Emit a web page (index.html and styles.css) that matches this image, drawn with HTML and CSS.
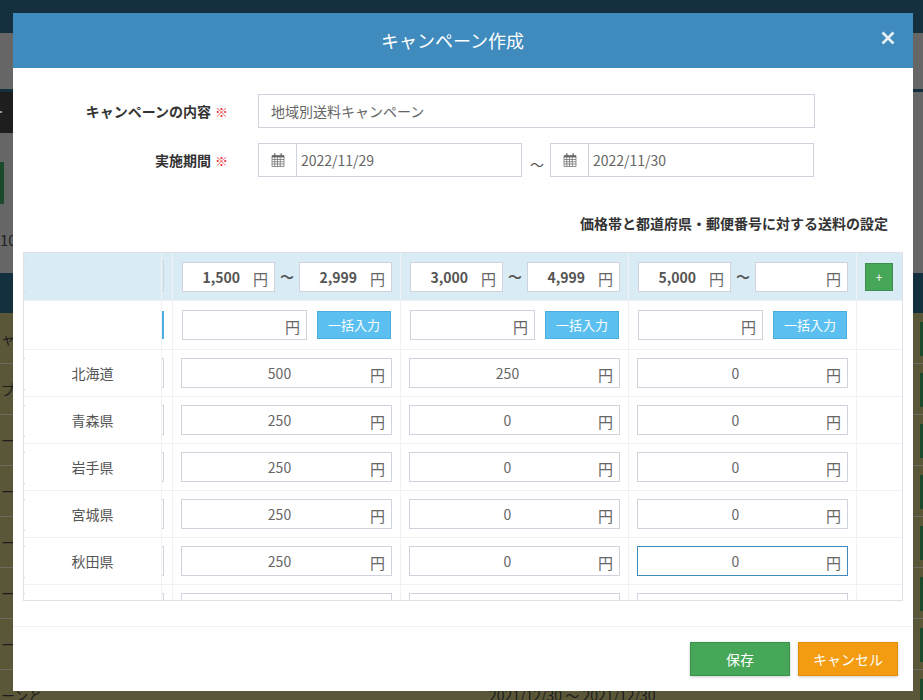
FILE: index.html
```html
<!DOCTYPE html>
<html lang="ja">
<head>
  <meta charset="UTF-8">
  <meta name="viewport" content="width=device-width, initial-scale=1.0">
  <title>キャンペーン作成</title>
  <link rel="stylesheet" href="styles.css">
</head>
<body>
  <div class="page">
    <div class="topbar"></div>
    <div class="subbar"></div>
    <div class="panel">
      <div class="panel-tab"></div>
      <div class="panel-btn"></div>
      <div class="panel-count">10</div>
    </div>
    <div class="list-head"></div>
    <div class="list-row"><div>ャ</div><div></div><div><span class="list-btn"></span></div></div>
    <div class="list-row"><div>プ</div><div></div><div><span class="list-btn"></span></div></div>
    <div class="list-row"><div>ー</div><div></div><div><span class="list-btn"></span></div></div>
    <div class="list-row"><div>ー</div><div></div><div><span class="list-btn"></span></div></div>
    <div class="list-row"><div>ー</div><div></div><div><span class="list-btn"></span></div></div>
    <div class="list-row"><div>ー</div><div></div><div><span class="list-btn"></span></div></div>
    <div class="list-row"><div>ー</div><div></div><div><span class="list-btn"></span></div></div>
    <div class="list-row"><div>ーンと</div><div class="list-date">2021/12/30 〜 2021/12/30</div><div><span class="list-btn"></span></div></div>
  </div>

  <div class="modal">
    <div class="modal-header">
      <h2>キャンペーン作成</h2>
      <svg class="modal-close" width="14" height="14" viewBox="0 0 14 14">
        <path d="M1.5 1.5L12.5 12.5M12.5 1.5L1.5 12.5" stroke="#e9f1f7" stroke-width="2.6" fill="none"/>
      </svg>
    </div>

    <div class="modal-body">
      <div class="form-grid">
        <div class="form-label">キャンペーンの内容<span class="req">※</span></div>
        <div class="text-input">地域別送料キャンペーン</div>
        <div class="form-label">実施期間<span class="req">※</span></div>
        <div class="date-range">
          <div class="date-input">
            <span class="date-icon">
              <svg width="14" height="14" viewBox="0 0 14 14">
                <path d="M1 2.500h12v11H1zM1 6.500h12M1 8.750h12M1 11h12M3.750 4.500v9M6.500 4.500v9M9.250 4.500v9" stroke="#666" stroke-width="0.7" fill="none"/>
                <path d="M1 2.500h12v2H1z" fill="#666"/>
                <path d="M3.800 0.300v2.700M10.200 0.300v2.700" stroke="#666" stroke-width="1.300" fill="none"/>
              </svg>
            </span>
            <span class="date-text">2022/11/29</span>
          </div>
          <span class="date-sep">〜</span>
          <div class="date-input">
            <span class="date-icon">
              <svg width="14" height="14" viewBox="0 0 14 14">
                <path d="M1 2.500h12v11H1zM1 6.500h12M1 8.750h12M1 11h12M3.750 4.500v9M6.500 4.500v9M9.250 4.500v9" stroke="#666" stroke-width="0.7" fill="none"/>
                <path d="M1 2.500h12v2H1z" fill="#666"/>
                <path d="M3.800 0.300v2.700M10.200 0.300v2.700" stroke="#666" stroke-width="1.300" fill="none"/>
              </svg>
            </span>
            <span class="date-text">2022/11/30</span>
          </div>
        </div>
      </div>

      <div class="section-title">価格帯と都道府県・郵便番号に対する送料の設定</div>

      <div class="price-table">
        <div class="price-row head-row">
          <div class="cell name-cell"></div>
          <div class="cell cut-cell"><span class="cut-input"></span></div>
          <div class="cell range-cell">
            <div class="field range-field">1,500<span class="yen">円</span></div><span class="range-sep">〜</span><div class="field range-field">2,999<span class="yen">円</span></div>
          </div>
          <div class="cell range-cell">
            <div class="field range-field">3,000<span class="yen">円</span></div><span class="range-sep">〜</span><div class="field range-field">4,999<span class="yen">円</span></div>
          </div>
          <div class="cell range-cell">
            <div class="field range-field">5,000<span class="yen">円</span></div><span class="range-sep">〜</span><div class="field range-field"><span class="yen">円</span></div>
          </div>
          <div class="cell add-cell"><span class="add-btn">+</span></div>
        </div>

        <div class="price-row bulk-row">
          <div class="cell name-cell no-ticks"></div>
          <div class="cell cut-cell"><span class="cut-btn"></span></div>
          <div class="cell bulk-cell"><div class="field bulk-field"><span class="yen">円</span></div><span class="bulk-btn">一括入力</span></div>
          <div class="cell bulk-cell"><div class="field bulk-field"><span class="yen">円</span></div><span class="bulk-btn">一括入力</span></div>
          <div class="cell bulk-cell"><div class="field bulk-field"><span class="yen">円</span></div><span class="bulk-btn">一括入力</span></div>
          <div class="cell"></div>
        </div>

        <div class="price-row">
          <div class="cell name-cell">北海道</div>
          <div class="cell cut-cell"><span class="cut-input"></span></div>
          <div class="cell fee-cell"><div class="field fee-field">500<span class="yen">円</span></div></div>
          <div class="cell fee-cell"><div class="field fee-field">250<span class="yen">円</span></div></div>
          <div class="cell fee-cell"><div class="field fee-field">0<span class="yen">円</span></div></div>
          <div class="cell"></div>
        </div>
        <div class="price-row">
          <div class="cell name-cell">青森県</div>
          <div class="cell cut-cell"><span class="cut-input"></span></div>
          <div class="cell fee-cell"><div class="field fee-field">250<span class="yen">円</span></div></div>
          <div class="cell fee-cell"><div class="field fee-field">0<span class="yen">円</span></div></div>
          <div class="cell fee-cell"><div class="field fee-field">0<span class="yen">円</span></div></div>
          <div class="cell"></div>
        </div>
        <div class="price-row">
          <div class="cell name-cell">岩手県</div>
          <div class="cell cut-cell"><span class="cut-input"></span></div>
          <div class="cell fee-cell"><div class="field fee-field">250<span class="yen">円</span></div></div>
          <div class="cell fee-cell"><div class="field fee-field">0<span class="yen">円</span></div></div>
          <div class="cell fee-cell"><div class="field fee-field">0<span class="yen">円</span></div></div>
          <div class="cell"></div>
        </div>
        <div class="price-row">
          <div class="cell name-cell">宮城県</div>
          <div class="cell cut-cell"><span class="cut-input"></span></div>
          <div class="cell fee-cell"><div class="field fee-field">250<span class="yen">円</span></div></div>
          <div class="cell fee-cell"><div class="field fee-field">0<span class="yen">円</span></div></div>
          <div class="cell fee-cell"><div class="field fee-field">0<span class="yen">円</span></div></div>
          <div class="cell"></div>
        </div>
        <div class="price-row">
          <div class="cell name-cell">秋田県</div>
          <div class="cell cut-cell"><span class="cut-input"></span></div>
          <div class="cell fee-cell"><div class="field fee-field">250<span class="yen">円</span></div></div>
          <div class="cell fee-cell"><div class="field fee-field">0<span class="yen">円</span></div></div>
          <div class="cell fee-cell"><div class="field fee-field focused">0<span class="yen">円</span></div></div>
          <div class="cell"></div>
        </div>
        <div class="price-row">
          <div class="cell name-cell"></div>
          <div class="cell cut-cell"><span class="cut-input"></span></div>
          <div class="cell fee-cell"><div class="field fee-field"></div></div>
          <div class="cell fee-cell"><div class="field fee-field"></div></div>
          <div class="cell fee-cell"><div class="field fee-field"></div></div>
          <div class="cell"></div>
        </div>
      </div>
    </div>

    <div class="modal-footer">
      <span class="btn btn-save">保存</span>
      <span class="btn btn-cancel">キャンセル</span>
    </div>
  </div>
</body>
</html>
```

FILE: styles.css
```css
* {
  box-sizing: border-box;
}
html, body {
  margin: 0;
  height: 700px;
  overflow: hidden;
}
body {
  position: relative;
  background-color: #666;
  font-family: 'Noto Sans CJK JP', 'Noto Sans', sans-serif;
  font-size: 14px;
  color: #666;
}

/* dimmed page behind the modal */
.topbar {
  height: 33px;
  background-color: #14303f;
}
.subbar {
  height: 59px;
  background-color: #666;
  border-bottom: 3px solid #14303f;
}
.panel {
  height: 181px;
  background-color: #666;
  color: #222;
}
.panel-tab {
  width: 60px;
  height: 41px;
  padding-top: 19px;
  background-color: #1e1e1e;
}
.panel-tab::before {
  content: '';
  display: block;
  width: 2px;
  height: 2px;
  background-color: #999;
}
.panel-btn {
  width: 4px;
  height: 42px;
  margin-top: 29px;
  background-color: #1a4a2b;
}
.panel-count {
  margin-top: 26px;
  font-size: 15px;
  line-height: 20px;
}
.list-head {
  height: 40px;
  background-color: #14303f;
}
.list-row {
  display: grid;
  grid-template-columns: 361px 421px 1fr;
  height: 51px;
  background-color: #5a5739;
  border-bottom: 1px solid #6b6a62;
  color: #1c1c1c;
  line-height: 51px;
}
.list-row > div:first-child {
  padding-left: 1px;
}
.list-row > div:last-child {
  display: flex;
  justify-content: flex-end;
  padding-top: 9px;
}
.list-date {
  padding-left: 128px;
}
.list-btn {
  width: 3px;
  height: 34px;
  background-color: #1a4a2b;
}

/* modal */
.modal {
  position: absolute;
  top: 13px;
  left: 13px;
  width: 900px;
  height: 678px;
  background-color: #fff;
}
.modal-header {
  position: relative;
  height: 55px;
  padding-right: 21px;
  background-color: #408bbd;
}
.modal-header h2 {
  margin: 0;
  color: #fff;
  font-size: 18px;
  font-weight: 400;
  line-height: 55px;
  text-align: center;
}
.modal-close {
  position: absolute;
  top: 18px;
  right: 18px;
}
.modal-body {
  height: 559px;
  padding: 26px 10px 0;
  border-bottom: 1px solid #f0f1f4;
}

.form-grid {
  display: grid;
  grid-template-columns: 204px 557px;
  column-gap: 31px;
  row-gap: 15px;
}
.form-label {
  display: flex;
  align-items: center;
  justify-content: flex-end;
  height: 34px;
  color: #333;
  font-weight: 700;
}
.req {
  margin: 0 -1px 0 4px;
  color: #e8303a;
  font-size: 13px;
  font-weight: 400;
}
.text-input {
  height: 34px;
  padding-left: 12px;
  border: 1px solid #d0d3de;
  line-height: 33px;
}
.date-range {
  display: flex;
  align-items: center;
}
.date-input {
  display: flex;
  width: 264px;
  height: 34px;
  border: 1px solid #d0d3de;
}
.date-icon {
  display: flex;
  align-items: center;
  justify-content: center;
  width: 38px;
  border-right: 1px solid #d0d3de;
}
.date-text {
  padding-left: 4px;
  line-height: 33px;
}
.date-sep {
  width: 28px;
  padding: 7px 0 0 2px;
  color: #555;
  text-align: center;
}

.section-title {
  margin-top: 36px;
  padding-right: 15px;
  color: #333;
  font-weight: 700;
  line-height: 20px;
  text-align: right;
}

/* price table */
.price-table {
  width: 880px;
  height: 349px;
  margin-top: 19px;
  border: 1px solid #e0e1e8;
  overflow: hidden;
}
.price-row {
  display: grid;
  grid-template-columns: 138px 11px 228px 228px 228px 44px;
  height: 47px;
  border-bottom: 1px solid #f0f1f4;
}
.cell {
  position: relative;
  border-right: 1px solid #f0f1f4;
}
.cell:last-child {
  border-right: none;
}
.head-row {
  height: 48px;
  background-color: #d9ecf6;
}
.bulk-row {
  height: 49px;
}
.name-cell {
  color: #555;
  text-align: center;
  line-height: 46px;
}
.name-cell::before {
  content: '';
  position: absolute;
  top: 8px;
  left: 0;
  width: 1px;
  height: 30px;
  border-top: 1px solid #d0d3de;
  border-bottom: 1px solid #d0d3de;
}
.name-cell.no-ticks::before {
  display: none;
}
.cut-input {
  display: block;
  width: 2px;
  height: 30px;
  margin-top: 8px;
  border: 1px solid #d0d3de;
  border-left: none;
}
.cut-btn {
  display: block;
  width: 2px;
  height: 28px;
  margin-top: 10px;
  background-color: #4aaee0;
}
.field {
  position: relative;
  height: 30px;
  background-color: #fff;
  border: 1px solid #d0d3de;
  line-height: 28px;
}
.yen {
  position: absolute;
  right: 6px;
  bottom: 0;
  color: #666;
  font-size: 15px;
  font-weight: 400;
  line-height: 24px;
}
.range-cell {
  display: flex;
  align-items: flex-start;
  padding: 9px 8px 0 9px;
}
.range-field {
  width: 93px;
  padding-right: 34px;
  color: #555;
  font-weight: 700;
  text-align: right;
}
.range-sep {
  width: 24px;
  color: #555;
  font-weight: 700;
  line-height: 28px;
  text-align: center;
}
.add-cell {
  padding-top: 10px;
  text-align: center;
}
.add-btn {
  display: inline-block;
  width: 28px;
  height: 28px;
  background-color: #46a758;
  border: 1px solid #3a8f4b;
  color: #fff;
  font-size: 12px;
  line-height: 25px;
}
.bulk-cell {
  display: flex;
  align-items: flex-start;
  gap: 10px;
  padding: 9px 0 0 9px;
}
.bulk-field {
  width: 125px;
}
.bulk-btn {
  width: 74px;
  height: 28px;
  margin-top: 1px;
  background-color: #5bc0f0;
  border: 1px solid #4aaee0;
  color: #fff;
  font-size: 13px;
  line-height: 25px;
  text-align: center;
}
.fee-cell {
  padding: 8px 0 0 8px;
}
.fee-field {
  width: 211px;
  padding-right: 14px;
  text-align: center;
}
.fee-field.focused {
  border-color: #408bbd;
}

.modal-footer {
  display: flex;
  justify-content: flex-end;
  gap: 8px;
  padding: 15px 15px 0 0;
}
.btn {
  width: 100px;
  height: 34px;
  border: 1px solid;
  box-shadow: 0 1px 3px rgba(0, 0, 0, 0.2);
  color: #fff;
  line-height: 33px;
  text-align: center;
}
.btn-save {
  background-color: #46a758;
  border-color: #3a8f4b;
}
.btn-cancel {
  background-color: #f39c12;
  border-color: #e08e0b;
}
```
